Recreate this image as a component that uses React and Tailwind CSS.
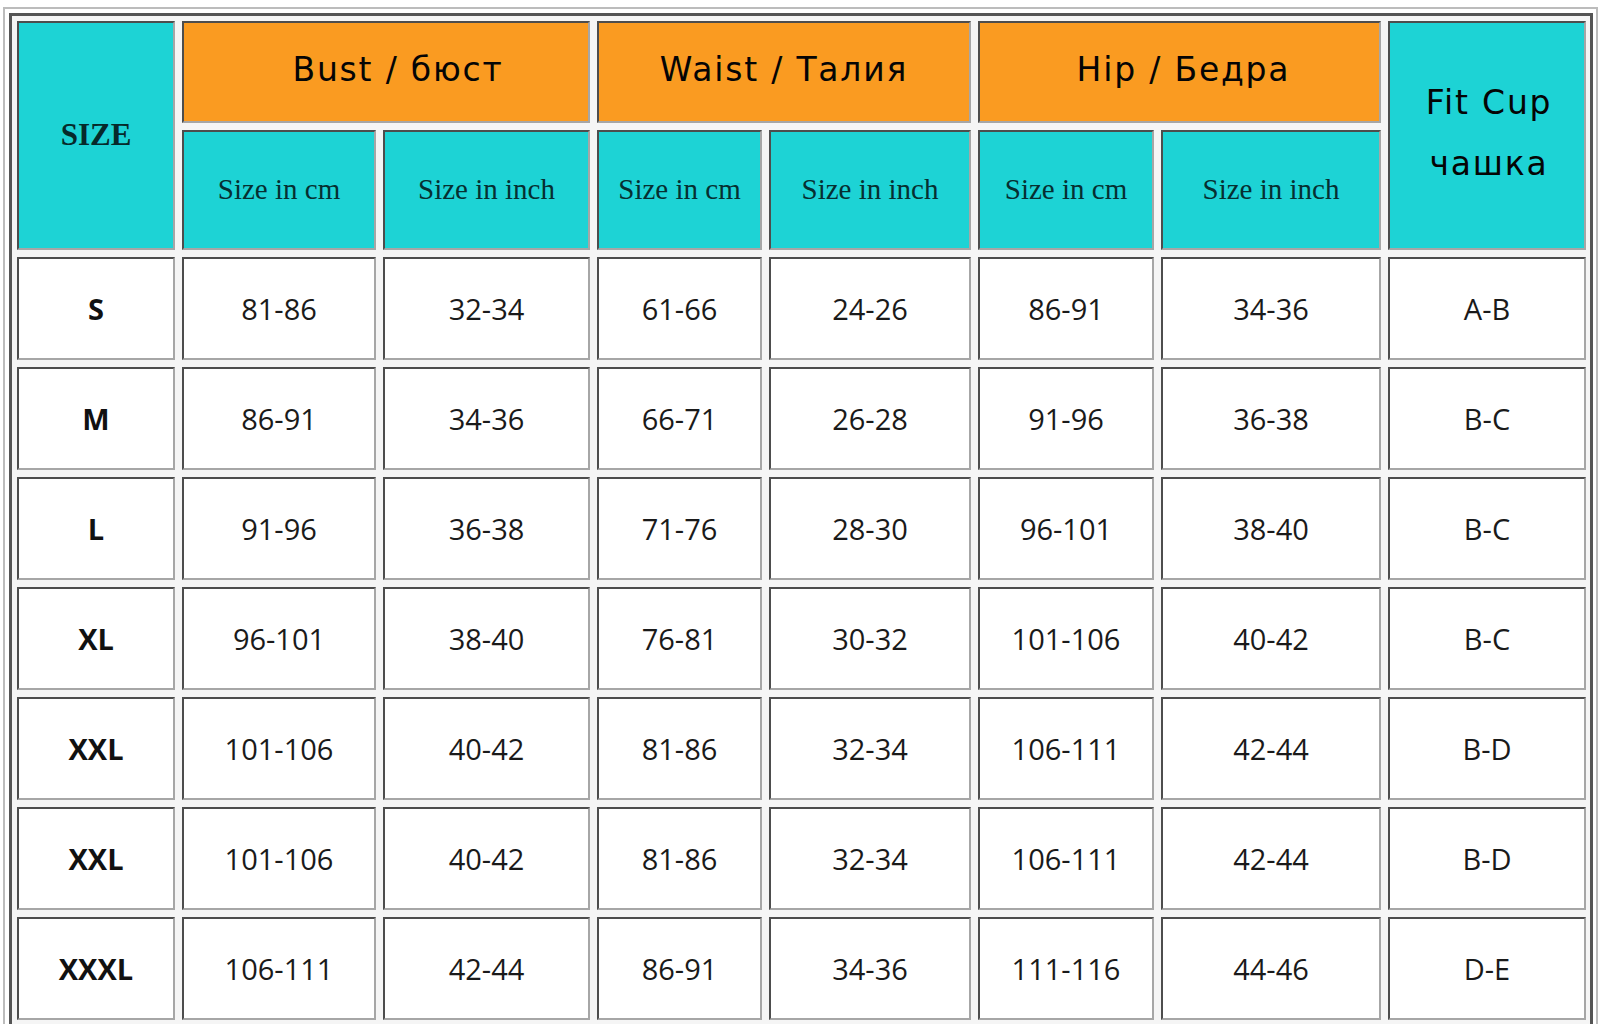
import React from "react";

const rows = [
  ["S", "81-86", "32-34", "61-66", "24-26", "86-91", "34-36", "A-B"],
  ["M", "86-91", "34-36", "66-71", "26-28", "91-96", "36-38", "B-C"],
  ["L", "91-96", "36-38", "71-76", "28-30", "96-101", "38-40", "B-C"],
  ["XL", "96-101", "38-40", "76-81", "30-32", "101-106", "40-42", "B-C"],
  ["XXL", "101-106", "40-42", "81-86", "32-34", "106-111", "42-44", "B-D"],
  ["XXL", "101-106", "40-42", "81-86", "32-34", "106-111", "42-44", "B-D"],
  ["XXXL", "106-111", "42-44", "86-91", "34-36", "111-116", "44-46", "D-E"],
];

const cell =
  "flex items-center justify-center border-2 border-t-[#4d4d4d] border-l-[#4d4d4d] border-r-[#a6a6a6] border-b-[#a6a6a6]";
const cyan = "bg-[#1dd3d5]";
const orange = "bg-[#fa9b21]";
const headFont = "font-['DejaVu_Sans',sans-serif] text-[33px] tracking-[1.8px] text-[#050505]";
const subFont = "font-['Liberation_Serif',serif] text-[29px] text-[#062f31]";
const dataFont = "font-['Open_Sans',sans-serif] text-[29px] text-[#1a1a1a]";

export default function App() {
  return (
    <div className="bg-white w-[1600px] min-h-[1040px] pl-[3px] pt-[7px]">
      <div className="w-[1595px] border-2 border-[#bcbcbc] p-[4px] pr-[3px] bg-white">
        <div className="border-[3px] border-[#555] pl-[5px] pt-[5px] pr-[4px] pb-[5px] bg-[#f5f5f5]">
          <div className="grid grid-cols-[158px_194px_207px_165px_202px_176px_220px_198px] grid-rows-[102px_120px_repeat(7,103px)] gap-[7px]">
            <div className={`${cell} ${cyan} row-span-2 font-['Liberation_Serif',serif] font-bold text-[31px] text-[#062a2b]`}>
              SIZE
            </div>
            <div className={`${cell} ${orange} col-span-2 ${headFont} pb-[4px] pl-[24px]`}>Bust / бюст</div>
            <div className={`${cell} ${orange} col-span-2 ${headFont} pb-[4px]`}>Waist / Талия</div>
            <div className={`${cell} ${orange} col-span-2 ${headFont} pb-[4px] pl-[8px]`}>Hip / Бедра</div>
            <div className={`${cell} ${cyan} row-span-2 flex-col ${headFont} leading-[61px] pb-[6px] pl-[4px]`}>
              <span>Fit Cup</span>
              <span>чашка</span>
            </div>
            {[0, 1, 2].map((i) => (
              <React.Fragment key={i}>
                <div className={`${cell} ${cyan} ${subFont}`}>Size in cm</div>
                <div className={`${cell} ${cyan} ${subFont}`}>Size in inch</div>
              </React.Fragment>
            ))}
            {rows.map((r, ri) =>
              r.map((v, ci) => (
                <div
                  key={`${ri}-${ci}`}
                  className={`${cell} bg-white ${dataFont} ${ci === 0 ? "font-bold text-[27px] text-[#111]" : ""}`}
                >
                  {v}
                </div>
              ))
            )}
          </div>
        </div>
      </div>
    </div>
  );
}
